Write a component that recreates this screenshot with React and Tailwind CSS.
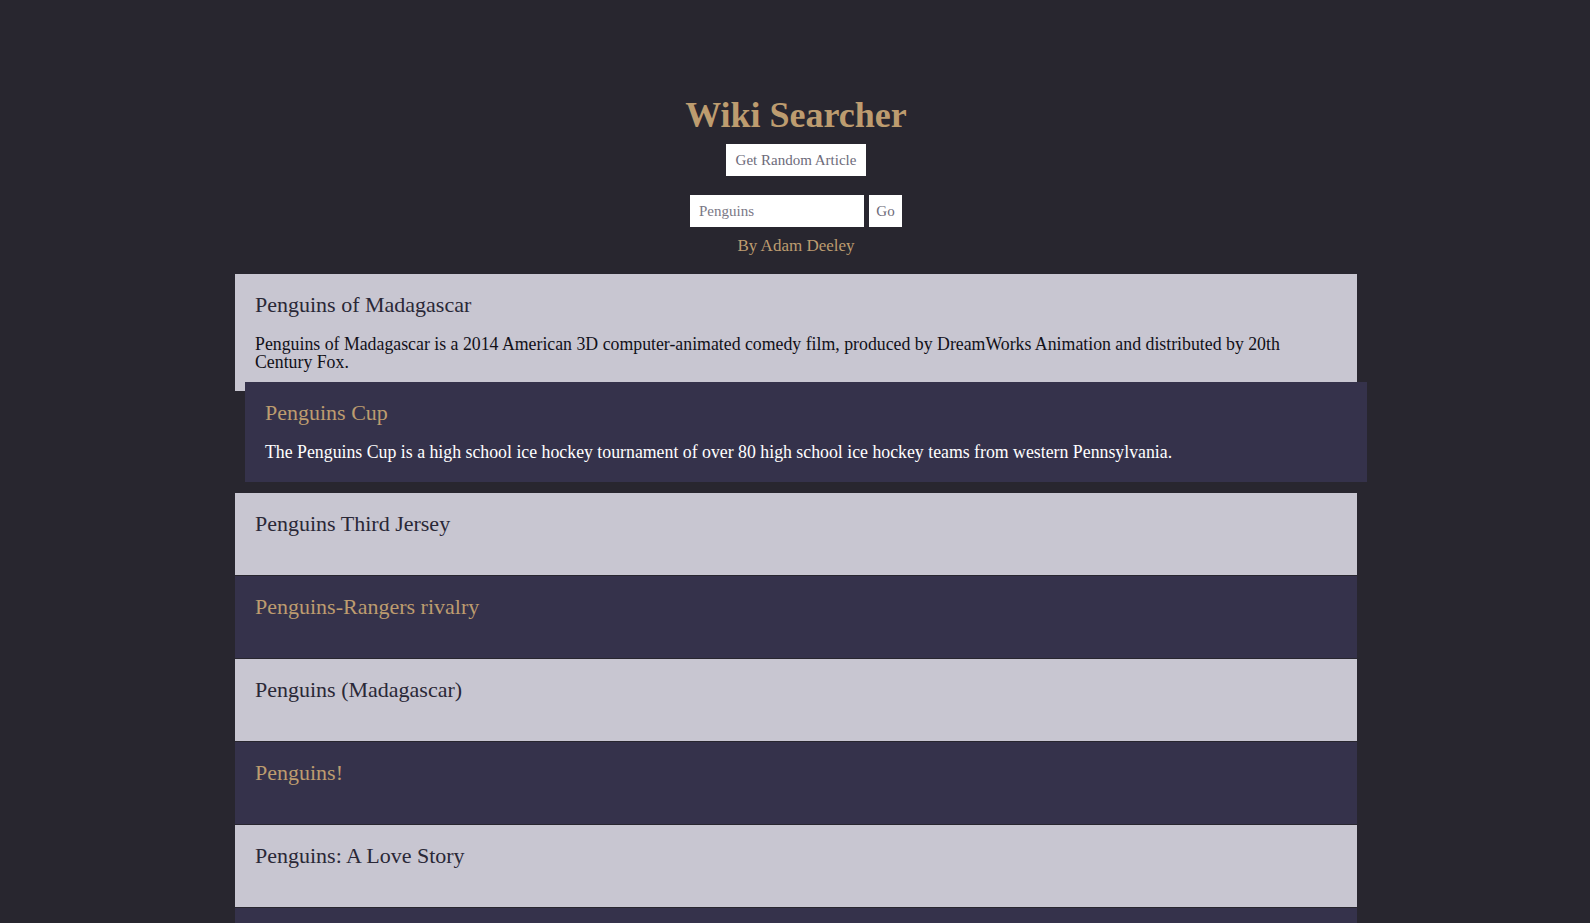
import { useState } from 'react';

const results = [
  {
    title: 'Penguins of Madagascar',
    snippet:
      'Penguins of Madagascar is a 2014 American 3D computer-animated comedy film, produced by DreamWorks Animation and distributed by 20th Century Fox.'
  },
  {
    title: 'Penguins Cup',
    snippet:
      'The Penguins Cup is a high school ice hockey tournament of over 80 high school ice hockey teams from western Pennsylvania.'
  },
  { title: 'Penguins Third Jersey', snippet: '' },
  { title: 'Penguins-Rangers rivalry', snippet: '' },
  { title: 'Penguins (Madagascar)', snippet: '' },
  { title: 'Penguins!', snippet: '' },
  { title: 'Penguins: A Love Story', snippet: '' },
  { title: 'Penguins (film)', snippet: '' },
  { title: 'Penguins of the World', snippet: '' },
  { title: 'Penguins in popular culture', snippet: '' }
];

const ResultCard = ({ result, dark, raised }) => (
  <article
    className={`px-5 pt-[18px] pb-5 ${dark ? 'bg-[#35324b]' : 'bg-[#c8c6d1]'} ${
      raised ? 'translate-x-[10px] -translate-y-[10px]' : ''
    }`}
  >
    <h3 className={`mb-[18px] text-[22px] leading-[26px] ${dark ? 'text-[#bd9c6f]' : 'text-[#2a2837]'}`}>
      {result.title}
    </h3>
    {result.snippet && (
      <p className={`text-[17.8px] leading-[17.5px] ${dark ? 'text-white' : 'text-[#111018]'}`}>{result.snippet}</p>
    )}
  </article>
);

export default function App() {
  const [query, setQuery] = useState('');

  return (
    <div className="min-h-screen bg-[#28262f] pl-[2px] font-['Liberation_Serif',serif]">
      <header className="flex flex-col items-center pt-[95px]">
        <h1 className="text-[36px] font-bold leading-[40px] text-[#bd9c6f]">Wiki Searcher</h1>
        <button className="mt-[9px] h-[32px] w-[140px] bg-white text-[15px] text-[#6d6b7a]">Get Random Article</button>
        <form className="mt-[19px] flex gap-[5px]" onSubmit={(e) => e.preventDefault()}>
          <input
            value={query}
            onChange={(e) => setQuery(e.target.value)}
            placeholder="Penguins"
            className="h-[32px] w-[174px] bg-white px-[9px] text-[15px] text-[#6d6b7a] placeholder:text-[#7a7886] outline-none"
          />
          <button className="h-[32px] w-[33px] bg-white text-[15px] text-[#6d6b7a]">Go</button>
        </form>
        <p className="mt-[9px] text-[17px] leading-[20px] text-[#bd9c6f]">By Adam Deeley</p>
      </header>

      <main className="mx-auto mt-[18px] flex w-[1122px] flex-col gap-px">
        {results.map((result, i) => (
          <ResultCard key={result.title} result={result} dark={i % 2 === 1} raised={i === 1} />
        ))}
      </main>
    </div>
  );
}
